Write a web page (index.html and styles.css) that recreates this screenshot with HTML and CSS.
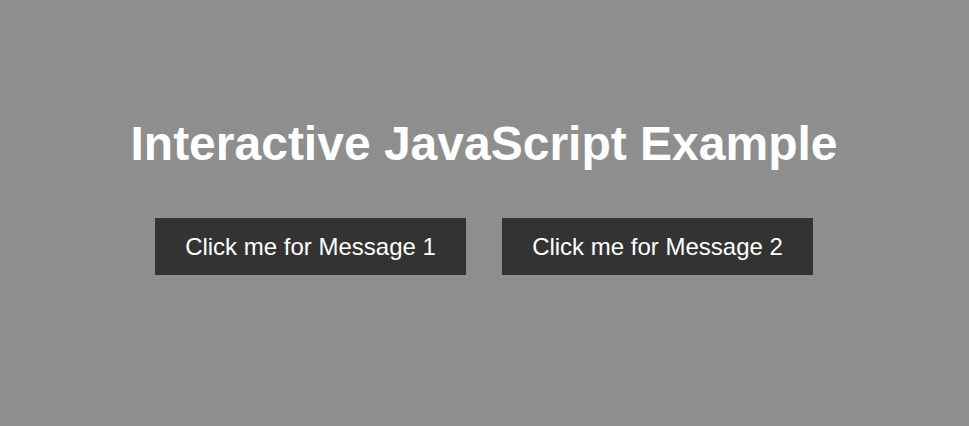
FILE: index.html
```html
<!DOCTYPE html>
<html>
<head>
<meta charset="utf-8">
<link rel="stylesheet" href="styles.css">
</head>
<body>
<div class="page">
  <h1 class="title">Interactive JavaScript Example</h1>
  <div class="buttons">
    <button class="btn">Click me for Message 1</button>
    <button class="btn">Click me for Message 2</button>
  </div>
</div>
</body>
</html>
```
FILE: styles.css
```css
html, body {
  margin: 0;
  padding: 0;
  background: #8e8e8e;
  height: 100%;
}
.page {
  display: flex;
  flex-direction: column;
  align-items: center;
  padding-top: 112px;
  padding-right: 1px;
  font-family: "Liberation Sans", Arial, sans-serif;
}
.title {
  margin: 0;
  font-size: 48px;
  font-weight: bold;
  color: #fff;
  line-height: 64px;
}
.buttons {
  display: flex;
  gap: 36px;
  margin-top: 42px;
}
.btn {
  font-family: "Liberation Sans", Arial, sans-serif;
  font-size: 24px;
  color: #fff;
  background: #333;
  border: none;
  padding: 0;
  width: 311px;
  height: 57px;
  cursor: pointer;
}
```
